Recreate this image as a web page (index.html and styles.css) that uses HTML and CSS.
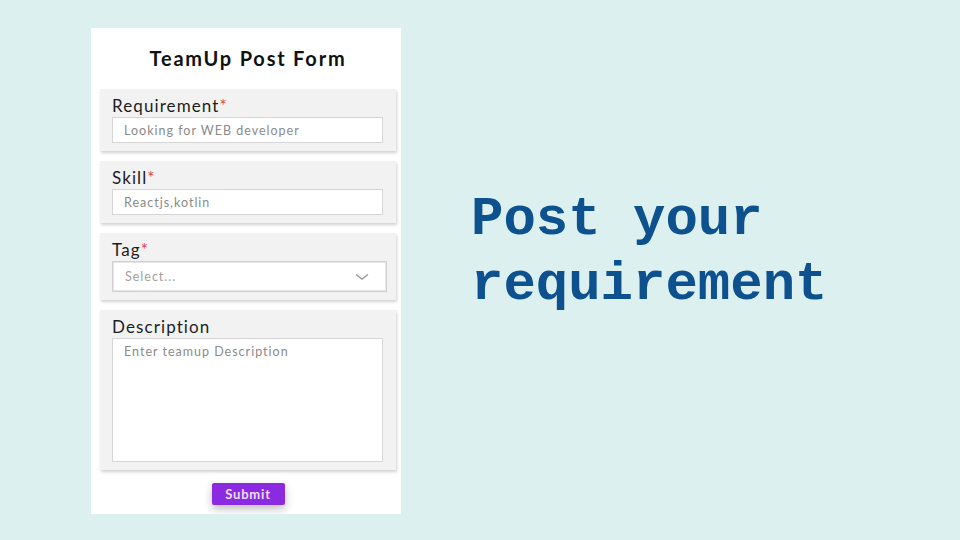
FILE: index.html
```html
<!DOCTYPE html>
<html lang="en">
<head>
    <meta charset="UTF-8">
    <meta name="viewport" content="width=device-width, initial-scale=1.0">
    <title>TeamUp Post Form</title>
<link rel="stylesheet" href="styles.css">
</head>
<body>
    <div class="page">
        <!-- the white form card on the left -->
        <form class="post-form">
            <h1 class="form-title">TeamUp Post Form</h1>

            <section class="field">
                <label>Requirement<span class="req">*</span></label>
                <input type="text" placeholder="Looking for WEB developer">
            </section>

            <section class="field">
                <label>Skill<span class="req">*</span></label>
                <input type="text" placeholder="Reactjs,kotlin">
            </section>

            <section class="field">
                <label>Tag<span class="req">*</span></label>
                <div class="select">
                    <span class="select-text">Select...</span>
                    <svg class="chevron" width="14" height="8" viewBox="0 0 14 8">
                        <path d="M1 1.5 L7 6 L13 1.5" fill="none" stroke="#9a9a9a" stroke-width="1.4"/>
                    </svg>
                </div>
            </section>

            <section class="field">
                <label>Description</label>
                <textarea placeholder="Enter teamup Description"></textarea>
            </section>

            <div class="actions">
                <button type="button" class="submit">Submit</button>
            </div>
        </form>

        <!-- headline on the right -->
        <h2 class="headline">Post your<br>requirement</h2>
    </div>
</body>
</html>
```

FILE: styles.css
```css
* {
    margin: 0;
    padding: 0;
    box-sizing: border-box;
}

body {
    background-color: #ddf0f0;
    font-family: 'Lato', 'Noto Sans', sans-serif;
}

.page {
    display: flex;
    align-items: flex-start;
    padding: 28px 0 0 91px;
}

.post-form {
    width: 310px;
    height: 486px;
    background-color: #ffffff;
    padding: 0 5px 0 9px;
}

.form-title {
    font-size: 20px;
    font-weight: bold;
    letter-spacing: 1.8px;
    color: #111;
    text-align: center;
    line-height: 24px;
    padding: 18px 0 19px 0;
}

.field {
    display: flex;
    flex-direction: column;
    background-color: #f2f2f2;
    padding: 6px 13px 8px 12px;
    margin-bottom: 10px;
    box-shadow: 1px 2px 3px rgba(0, 0, 0, 0.18);
}

.field label {
    font-size: 17px;
    letter-spacing: 1.1px;
    line-height: 22px;
    color: #1e1e1e;
}

.req {
    color: #e0404a;
}

.field input,
.field textarea {
    height: 26px;
    border: 1px solid #d6d6d6;
    background-color: #fff;
    font-family: 'Lato', 'Noto Sans', sans-serif;
    font-size: 12.5px;
    letter-spacing: 1px;
    padding: 0 11px;
    outline: none;
}

.field input::placeholder,
.field textarea::placeholder {
    color: #8a8a8a;
}

.field textarea {
    height: 124px;
    resize: none;
    padding: 5px 11px;
    line-height: 16px;
}

.select {
    display: flex;
    align-items: center;
    justify-content: space-between;
    height: 31px;
    margin-right: -4px;
    border: 1px solid #d0d0d0;
    box-shadow: inset 0 0 0 1px #e6e6e6;
    background-color: #fff;
    padding: 0 17px 0 12px;
}

.select-text {
    font-size: 12.5px;
    letter-spacing: 1px;
    color: #a0a0a0;
}

.actions {
    display: flex;
    justify-content: center;
    padding-top: 3px;
}

.submit {
    width: 73px;
    height: 22px;
    border: none;
    border-radius: 2px;
    background-color: #8a2be2;
    color: #f3dcf3;
    font-family: 'Lato', 'Noto Sans', sans-serif;
    font-size: 13px;
    font-weight: bold;
    letter-spacing: 0.8px;
    box-shadow: 0 4px 8px rgba(0, 0, 0, 0.25);
}

.headline {
    margin: 159px 0 0 70px;
    font-family: 'Liberation Mono', 'Courier New', monospace;
    font-size: 54px;
    font-weight: bold;
    line-height: 65px;
    color: #0d528f;
}
```
